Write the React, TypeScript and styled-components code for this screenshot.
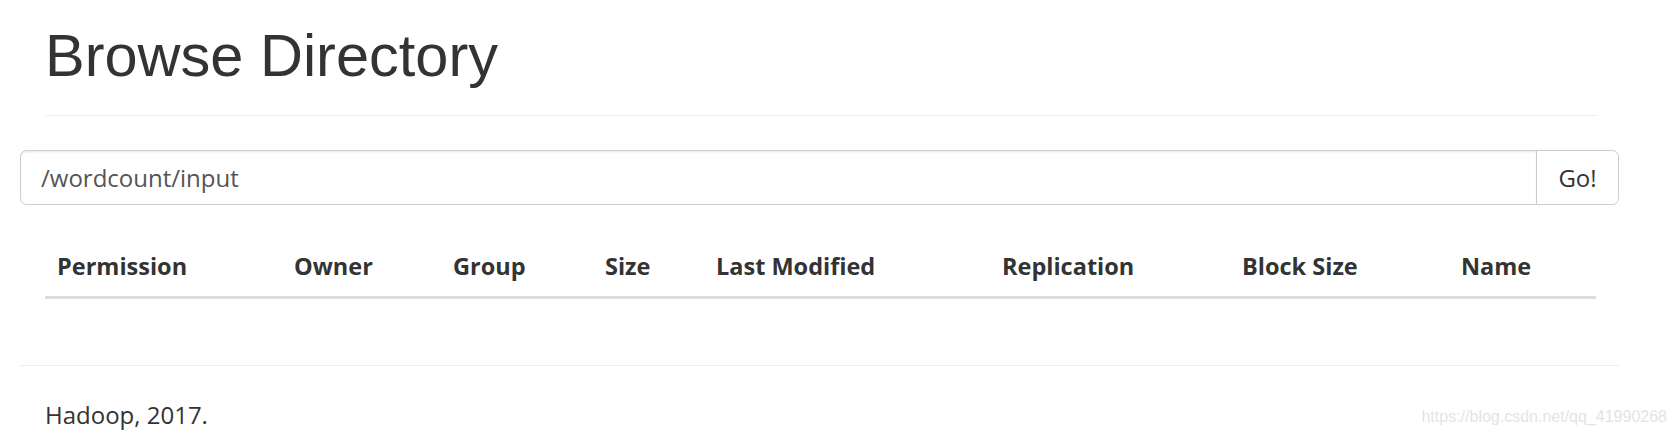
import React from "react";
import styled, { createGlobalStyle } from "styled-components";

const columns = [
  { label: "Permission", width: 237 },
  { label: "Owner", width: 159 },
  { label: "Group", width: 152 },
  { label: "Size", width: 111 },
  { label: "Last Modified", width: 286 },
  { label: "Replication", width: 240 },
  { label: "Block Size", width: 219 },
  { label: "Name", width: 147 },
];

function App() {
  const [directory, setDirectory] = React.useState("/wordcount/input");

  return (
    <StyledApp>
      <GlobalStyle />
      <StyledPage>
        <StyledInner>
          <StyledPageHeader>
            <h1>Browse Directory</h1>
          </StyledPageHeader>
        </StyledInner>

        <StyledInputGroup>
          <input
            className="directory-input"
            value={directory}
            onChange={(e) => setDirectory(e.target.value)}
          />
          <button>Go!</button>
        </StyledInputGroup>

        <StyledInner>
          <StyledTable>
            <colgroup>
              {columns.map((col) => (
                <col key={col.label} style={{ width: col.width }} />
              ))}
            </colgroup>
            <thead>
              <tr>
                {columns.map((col) => (
                  <th key={col.label}>{col.label}</th>
                ))}
              </tr>
            </thead>
            <tbody></tbody>
          </StyledTable>
        </StyledInner>

        <StyledFooterRule />
        <StyledInner>
          <StyledCopyright>Hadoop, 2017.</StyledCopyright>
        </StyledInner>
      </StyledPage>
      <StyledWatermark>https://blog.csdn.net/qq_41990268</StyledWatermark>
    </StyledApp>
  );
}

const GlobalStyle = createGlobalStyle`
  * {
    box-sizing: border-box;
  }
  body {
    margin: 0;
    background: #fff;
    color: #333;
    font-family: "Open Sans", "Noto Sans", sans-serif;
    font-size: 24px;
  }
`;

const StyledApp = styled.div`
  position: relative;
  min-height: 437px;
`;

const StyledPage = styled.div`
  padding: 0 57px 0 20px;
`;

const StyledInner = styled.div`
  padding: 0 23px 0 25px;
`;

const StyledPageHeader = styled.div`
  padding: 23px 0 14px;
  border-bottom: 1px solid #eee;

  h1 {
    margin: 0 0 13px;
    font-family: "Liberation Sans", Arial, sans-serif;
    font-size: 59.5px;
    font-weight: 500;
    line-height: 65px;
    color: #333;
  }
`;

const StyledInputGroup = styled.div`
  display: flex;
  margin-top: 34px;
  height: 55px;

  .directory-input {
    flex: 1;
    min-width: 0;
    height: 55px;
    padding: 0 20px;
    border: 1px solid #ccc;
    border-radius: 6.5px 0 0 6.5px;
    box-shadow: inset 0 1.6px 1.6px rgba(0, 0, 0, 0.075);
    font-family: inherit;
    font-size: 24px;
    color: #555;
    outline: none;
  }

  button {
    width: 83px;
    height: 55px;
    margin-left: -1px;
    padding: 0;
    border: 1px solid #ccc;
    border-radius: 0 6.5px 6.5px 0;
    background: #fff;
    font-family: inherit;
    font-size: 24px;
    color: #333;
    cursor: pointer;
  }
`;

const StyledTable = styled.table`
  width: 100%;
  margin-top: 32px;
  border-collapse: collapse;
  table-layout: fixed;

  th {
    padding: 13px 12px;
    border-bottom: 3px solid #ddd;
    text-align: left;
    font-size: 23.5px;
    font-weight: 700;
    line-height: 33px;
    white-space: nowrap;
  }
`;

const StyledFooterRule = styled.hr`
  margin: 66px 0 0;
  border: 0;
  border-top: 1px solid #eee;
`;

const StyledCopyright = styled.p`
  margin: 32px 0 0;
  line-height: 33px;
`;

const StyledWatermark = styled.div`
  position: absolute;
  top: 408px;
  right: 9px;
  font-family: "Liberation Sans", Arial, sans-serif;
  font-size: 16px;
  line-height: 18px;
  color: #e4e4e4;
  pointer-events: none;
`;

export default App;
